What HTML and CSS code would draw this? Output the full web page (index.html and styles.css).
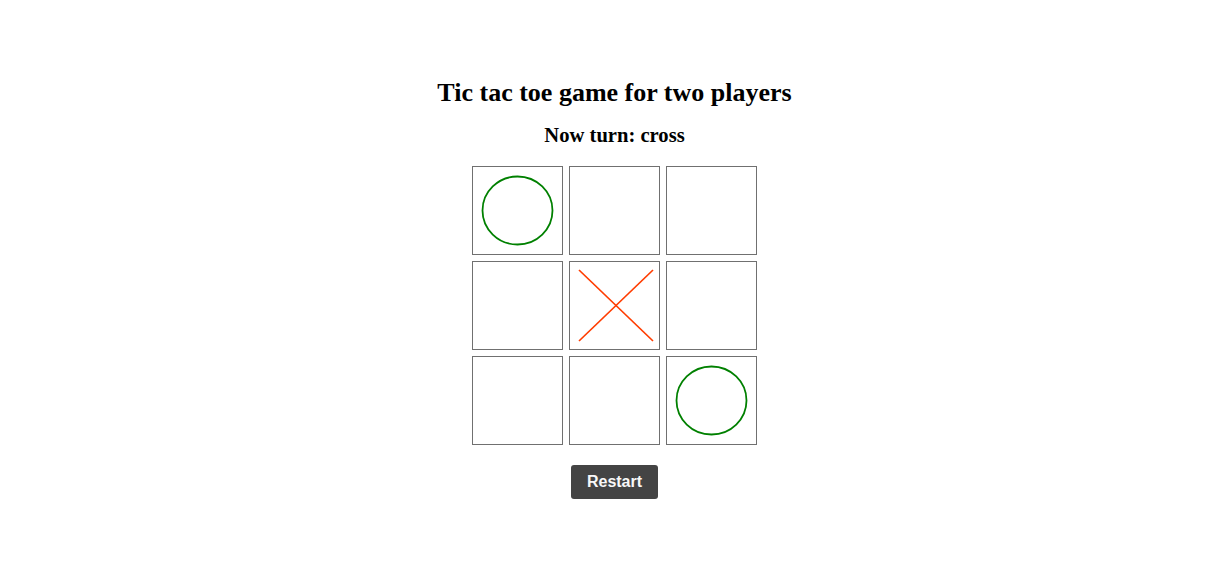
FILE: index.html
```html
<!DOCTYPE html>
<html>
<head>
<meta charset="utf-8">
<link rel="stylesheet" href="styles.css">
</head>
<body>
<main class="game">
  <h1 class="title">Tic tac toe game for two players</h1>
  <h2 class="status">Now turn: cross</h2>
  <div class="board">
    <div class="cell"><svg viewBox="0 0 89 87" width="89" height="87"><ellipse cx="44.5" cy="43.5" rx="35" ry="34" class="o"/></svg></div>
    <div class="cell"></div>
    <div class="cell"></div>
    <div class="cell"></div>
    <div class="cell"><svg viewBox="0 0 89 87" width="89" height="87"><line x1="9" y1="8" x2="83" y2="79" class="x"/><line x1="83" y1="8" x2="9" y2="79" class="x"/></svg></div>
    <div class="cell"></div>
    <div class="cell"></div>
    <div class="cell"></div>
    <div class="cell"><svg viewBox="0 0 89 87" width="89" height="87"><ellipse cx="44.5" cy="43.5" rx="35" ry="34" class="o"/></svg></div>
  </div>
  <button class="restart">Restart</button>
</main>
</body>
</html>
```
FILE: styles.css
```css
html, body {
  margin: 0;
  padding: 0;
  background: #fff;
}
body {
  font-family: "Liberation Serif", "Times New Roman", serif;
}
.game {
  display: flex;
  flex-direction: column;
  align-items: center;
  padding-top: 78px;
}
.title {
  margin: 0;
  font-size: 26px;
  line-height: 30px;
  font-weight: bold;
}
.status {
  margin: 15px 0 0;
  font-size: 20.6px;
  line-height: 24px;
  font-weight: bold;
}
.board {
  margin-top: 19px;
  display: grid;
  grid-template-columns: repeat(3, 91px);
  grid-template-rows: repeat(3, 89px);
  gap: 6px;
}
.cell {
  box-sizing: border-box;
  border: 1px solid #707070;
  width: 91px;
  height: 89px;
}
.cell svg {
  display: block;
}
.o {
  fill: none;
  stroke: #008000;
  stroke-width: 1.8;
}
.x {
  stroke: #ff3c00;
  stroke-width: 1.7;
}
.restart {
  margin-top: 20px;
  width: 87px;
  height: 34px;
  background: #444;
  color: #f8f8f8;
  border: none;
  border-radius: 3px;
  font-family: "Liberation Sans", Arial, sans-serif;
  font-weight: bold;
  font-size: 16px;
  padding: 0;
}
```
